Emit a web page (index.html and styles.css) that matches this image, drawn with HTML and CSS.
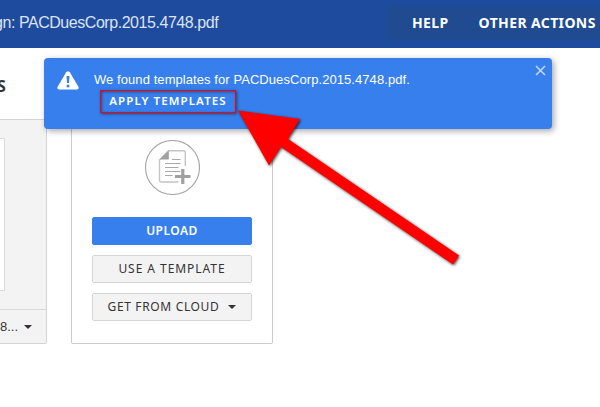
FILE: index.html
```
<!DOCTYPE html>
<html lang="en">
<head>
<meta charset="utf-8">
<title>Documents</title>
<link rel="stylesheet" href="styles.css">
</head>
<body>
<header class="topbar">
  <div class="doc-title">gn: PACDuesCorp.2015.4748.pdf</div>
  <nav class="actions"><span class="help">HELP</span><span class="other">OTHER ACTIONS</span></nav>
</header>
<main>
  <h1 class="heading">S</h1>
  <div class="cards">
    <section class="card file-card">
      <div class="preview"><div class="page"></div></div>
      <div class="file-footer"><span class="file-name">8...</span><span class="caret"></span></div>
    </section>
    <section class="card upload-card">
      <svg class="doc-icon" width="56" height="56" viewBox="0 0 56 56" fill="none">
        <circle cx="28.5" cy="27.5" r="27" stroke="#a3a3a3" stroke-width="1.1"/>
        <path d="M41.3 26V12.5q0-1.7-1.7-1.7H24.5L15.5 20V40.3q0 1.7 1.7 1.7H34.5" stroke="#c4c4c4" stroke-width="1.4"/>
        <path d="M24.8 10.5V19.5H15.5z" fill="#a0a0a0"/>
        <path d="M28 19.5H36.5M21 23.5H36.5M21 27.5H34.5M21 31.5H36.5M21 35.5H28.5" stroke="#a8a8a8" stroke-width="1.1"/>
        <path d="M38.8 29V44M31 36.5H46.5" stroke="#a0a0a0" stroke-width="3.2"/>
      </svg>
      <button class="btn primary"><span class="t-upload">UPLOAD</span></button>
      <button class="btn"><span class="t-template">USE A TEMPLATE</span></button>
      <button class="btn cloud"><span class="t-cloud">GET FROM CLOUD</span><span class="caret"></span></button>
    </section>
  </div>
</main>
<aside class="toast">
  <svg class="warn" width="22" height="19" viewBox="0 0 22 19">
    <path d="M9.2 1.2Q11-.8 12.8 1.2L21.4 15.8Q22.4 18.4 19.8 18.5H2.2Q-.4 18.4.6 15.8z" fill="#fff"/>
    <path d="M9.5 5h3l-.5 7h-2z" fill="#377fed"/>
    <circle cx="11" cy="15" r="1.5" fill="#377fed"/>
  </svg>
  <div class="toast-body">
    <div class="message">We found templates for PACDuesCorp.2015.4748.pdf.</div>
    <div class="apply"><span class="t-apply">APPLY TEMPLATES</span></div>
  </div>
  <svg class="close" width="11" height="11" viewBox="0 0 11 11"><path d="M1 1l9 9M10 1L1 10" stroke="#c3d9fa" stroke-width="1.5"/></svg>
</aside>
<svg class="arrow" width="240" height="180" viewBox="0 0 240 180">
  <polygon points="8,15.5 70,24 58,44 229,160.5 223,169.5 51,52 39,70.5" fill="#f00"/>
</svg>
</body>
</html>
```
FILE: styles.css
```
* { box-sizing: border-box; }
body {
  margin: 0;
  width: 600px;
  height: 407px;
  overflow: hidden;
  background: #fff;
  font-family: "Liberation Sans", Arial, sans-serif;
  position: relative;
}
.topbar {
  height: 48px;
  background: #1f4b9e;
  display: flex;
  justify-content: space-between;
  padding-top: 6px;
}
.doc-title {
  margin-left: -6px;
  font-size: 16px;
  letter-spacing: -0.45px;
  line-height: 34px;
  color: #dbe4f3;
  white-space: nowrap;
}
.actions {
  width: 213px;
  height: 34px;
  padding-left: 25px;
  display: flex;
  gap: 30px;
  background: #204b91;
  color: #fff;
  font: bold 14px/34px "Noto Sans", sans-serif;
  letter-spacing: 0.38px;
  white-space: nowrap;
}
.heading {
  margin: 0;
  height: 71px;
  padding-top: 28px;
  margin-left: -3px;
  font: bold 16px/20px "Noto Sans", sans-serif;
  color: #333;
}
.cards { display: flex; gap: 24px; }
.card { height: 225px; border: 1px solid #ccc; border-radius: 2px; }
.file-card {
  width: 47px;
  border-left: 0;
  border-radius: 0 0 2px 0;
  background: #f3f3f3;
  border-color: #d3d3d3;
}
.preview { height: 190px; padding-top: 18px; border-bottom: 1px solid #d8d8d8; }
.page { width: 5px; height: 153px; background: #fff; border: 1px solid #dcdcdc; border-left: 0; }
.file-footer { height: 33px; display: flex; align-items: center; gap: 6px; }
.file-name { font-size: 13px; color: #333; }
.caret { width: 0; height: 0; border: 4px solid transparent; border-top-color: #333; border-bottom: 0; }
.upload-card {
  width: 202px;
  display: flex;
  flex-direction: column;
  align-items: center;
  gap: 10px;
  padding-top: 20px;
  background: #fff;
}
.doc-icon { margin-bottom: 11px; }
.btn {
  width: 160px;
  height: 28px;
  padding: 0 0 2px;
  display: flex;
  align-items: center;
  justify-content: center;
  border: 1px solid #d6d6d6;
  border-radius: 2px;
  background: #f3f3f3;
  color: #333;
  font: 12px/15px "Noto Sans", sans-serif;
  letter-spacing: 0.95px;
  white-space: nowrap;
}
.primary { background: #377fed; border-color: #377fed; color: #fff; font-weight: 600; letter-spacing: 0.5px; }
.cloud { gap: 9px; letter-spacing: 0.65px; }
.cloud .caret { margin-top: 2px; }
.toast {
  position: absolute;
  left: 44px;
  top: 58px;
  width: 508px;
  height: 71px;
  display: flex;
  padding: 13px 0 0 13px;
  border-radius: 4px;
  background: #377fed;
  box-shadow: 2px 2px 6px rgba(0,0,0,.35);
  color: #fff;
}
.toast-body { margin-left: 15px; width: 446px; }
.message { font-size: 13px; line-height: 17px; letter-spacing: 0.07px; white-space: nowrap; }
.apply {
  width: 136px;
  height: 23px;
  padding-bottom: 3px;
  margin: 2px 0 0 6px;
  display: flex;
  align-items: center;
  justify-content: center;
  border: 1px solid #f00;
  box-shadow: 1px 1px 3px rgba(0,0,0,.5), inset 1px 1px 3px rgba(0,0,0,.4);
  font: 600 11.5px/15px "Noto Sans", sans-serif;
  letter-spacing: 1.1px;
  white-space: nowrap;
}
.close { margin: -6px 0 0 -5px; }
.arrow {
  position: absolute;
  left: 230px;
  top: 95px;
  filter: drop-shadow(1px 1.5px 1.5px rgba(0,0,0,.75));
}
```
